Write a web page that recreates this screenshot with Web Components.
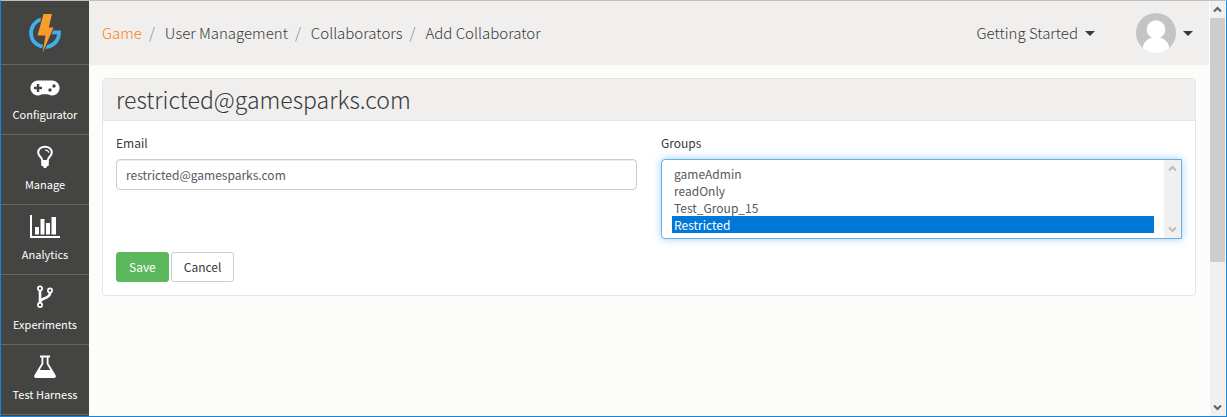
<!DOCTYPE html>
<html lang="en">
<head>
<meta charset="utf-8">
<title>Add Collaborator</title>
<style>
  html, body { margin: 0; height: 100%; }
  body { font: 13px/20px "Noto Sans CJK SC", "Open Sans", sans-serif; color: #373a3c; overflow: hidden; }
</style>
</head>
<body>
<app-shell>
  <side-nav slot="nav">
    <side-item icon="gamepad">Configurator</side-item>
    <side-item icon="bulb">Manage</side-item>
    <side-item icon="chart">Analytics</side-item>
    <side-item icon="fork">Experiments</side-item>
    <side-item icon="flask">Test Harness</side-item>
    <side-item></side-item>
  </side-nav>
  <top-bar slot="top"></top-bar>
  <form-panel heading="restricted@gamesparks.com">
    <collaborator-form></collaborator-form>
  </form-panel>
  <scroll-rail slot="rail"></scroll-rail>
</app-shell>

<script>
const define = (name, html, setup) => customElements.define(name, class extends HTMLElement {
  connectedCallback() {
    if (this.shadowRoot) return;
    this.attachShadow({ mode: 'open' }).innerHTML = '<style>*{box-sizing:border-box}</style>' + html;
    if (setup) setup(this, this.shadowRoot);
  }
});

define('app-shell', `
<style>
  :host { display: flex; box-sizing: border-box; height: 100vh; border: 1px solid #1883d7; border-top-color: #bfbfbf; background: #fcfcfa; overflow: hidden; }
  .main { flex: 1; min-width: 0; }
  main { padding: 13px; }
</style>
<slot name="nav"></slot>
<div class="main"><slot name="top"></slot><main><slot></slot></main></div>
<slot name="rail"></slot>`);

define('side-nav', `
<style>
  :host { display: block; flex: none; width: 88px; background: #444442; overflow: hidden; }
  .logo { display: flex; height: 64px; align-items: center; justify-content: center; border-bottom: 1px solid #666664; }
</style>
<a class="logo" href="#" aria-label="Home">
  <svg width="34" height="44" viewBox="0 0 34 44">
    <path d="M13 8.500A14 14 0 1 0 31 21.300H22.500" fill="none" stroke="#3fb1e8" stroke-width="3.800"/>
    <path d="M15.500 3H24L20.800 16.500H25.500L14.500 42L17.500 24.500H9.500Z" fill="#f99d2a" stroke="#444442" stroke-width="2" paint-order="stroke"/>
  </svg>
</a>
<nav><slot></slot></nav>`);

const icons = {
  gamepad: `<svg width="30" height="24" viewBox="0 -4 30 24"><path fill="#fff" fill-rule="evenodd" d="M8 1.500H22A7.500 7.500 0 1 1 18 15.300H12A7.500 7.500 0 1 1 8 1.500ZM6.800 5V7.800H4V10.200H6.800V13H9.200V10.200H12V7.800H9.200V5Z"/><circle cx="20" cy="11" r="1.700" fill="#444442"/><circle cx="24" cy="7" r="1.700" fill="#444442"/></svg>`,
  bulb: `<svg width="18" height="24" viewBox="0 0 18 24"><path d="M6.500 16C6.300 12 2.200 11.500 2.200 7.500C2.200 4 5.200 1.800 9 1.800S15.800 4 15.800 7.500C15.800 11.500 11.700 12 11.500 16Z" fill="none" stroke="#fff" stroke-width="2"/><path d="M9 5C11 5 12.500 6 12.700 7.600" fill="none" stroke="#fff" stroke-width="1.200"/><path d="M5.200 15.500H12.800V20.500L10.800 21.500L10 23H8L7.200 21.500L5.200 20.500Z" fill="#fff"/></svg>`,
  chart: `<svg width="32" height="24" viewBox="0 0 32 24"><path fill="#fff" d="M1 0H3V21H31V23H1ZM6 12H10V19.500H6ZM11.500 4H15.500V19.500H11.500ZM17 8H21V19.500H17ZM22.500 2H27V19.500H22.500Z"/></svg>`,
  fork: `<svg width="18" height="24" viewBox="0 0 18 24" fill="none" stroke="#fff"><circle cx="4" cy="3.500" r="2.100" stroke-width="1.700"/><circle cx="14" cy="5.500" r="2.100" stroke-width="1.700"/><circle cx="4" cy="20" r="2.100" stroke-width="1.700"/><path d="M4 6V17.500M14 8C14 14.500 4.500 12 4.200 17" stroke-width="2.600"/></svg>`,
  flask: `<svg width="24" height="24" viewBox="0 0 24 24"><path fill="#fff" fill-rule="evenodd" d="M7 .5H17V2.500H15.500V8.500L22.500 20C23.500 22 22.500 23 21 23H3C1.500 23 .5 22 1.500 20L8.500 8.500V2.500H7ZM10.300 2.500V9L6.700 15H17.300L13.700 9V2.500Z"/></svg>`
};
define('side-item', `
<style>
  :host { display: block; }
  a { display: flex; flex-direction: column; align-items: center; height: 70px; padding-top: 10px; border-bottom: 1px solid #666664; color: #fff; text-decoration: none; font-size: 11px; }
  .icon { display: flex; height: 24px; align-items: center; margin-bottom: 5px; }
  svg { display: block; }
</style>
<a href="#"><span class="icon"></span><span><slot></slot></span></a>`,
(el, root) => { root.querySelector('.icon').innerHTML = icons[el.getAttribute('icon')] || ''; });

define('top-bar', `
<style>
  :host { display: flex; justify-content: space-between; align-items: center; height: 64px; padding: 0 16px 0 13px; background: #f0efee; font-size: 15px; line-height: 24px; font-weight: 300; box-sizing: border-box; }
  ol { display: flex; list-style: none; margin: 0; padding: 0; }
  li + li::before { content: "/"; color: #818a91; padding: 0 10px 0 7px; }
  a { color: inherit; text-decoration: none; }
  li:first-child a { color: #ff7f00; }
  .right { display: flex; align-items: center; gap: 41px; }
  button { display: flex; align-items: center; gap: 7px; border: 0; padding: 0; background: none; font: inherit; color: inherit; }
  .caret { border: 5px solid transparent; border-top-color: #373a3c; border-bottom: 0; }
  svg { display: block; }
</style>
<nav aria-label="Breadcrumb"><ol>
  <li><a href="#">Game</a></li><li><a href="#">User Management</a></li><li><a href="#">Collaborators</a></li><li>Add Collaborator</li>
</ol></nav>
<div class="right">
  <button type="button">Getting Started <span class="caret"></span></button>
  <button type="button" aria-label="Account">
    <svg width="40" height="40" viewBox="0 0 40 40"><defs><clipPath id="c"><circle cx="20" cy="20" r="20"/></clipPath></defs><g clip-path="url(#c)"><path fill="#c4c4c4" d="M0 0H40V40H0Z"/><circle cx="20" cy="16.500" r="9.300" fill="#fff"/><path fill="#fff" d="M6 40C6 29 12 24 20 24S34 29 34 40Z"/></g></svg>
    <span class="caret"></span>
  </button>
</div>`);

define('form-panel', `
<style>
  :host { display: block; border: 1px solid #e5e5e5; border-radius: 4px; background: #fff; overflow: hidden; }
  h1 { margin: 0; padding: 4px 13px; background: #f0efee; border-bottom: 1px solid #e5e5e5; font-size: 23px; line-height: 33px; font-weight: 300; }
  div { padding: 13px; }
</style>
<h1></h1><div><slot></slot></div>`,
(el, root) => { root.querySelector('h1').textContent = el.getAttribute('heading'); });

define('collaborator-form', `
<style>
  :host { display: block; font-size: 12px; }
  .row { display: grid; grid-template-columns: 1fr 1fr; gap: 24px; }
  label { display: block; line-height: 18px; margin-bottom: 7px; }
  input, select, button { display: block; font: inherit; }
  input { width: 100%; height: 31px; padding: 0 9px; border: 1px solid #ccc; border-radius: 4px; color: #55595c; background: #fff; box-shadow: inset 0 1px 1px #00000013; outline: 0; }
  .list { display: flex; height: 80px; border: 1px solid #66afe9; border-radius: 4px 0 0 4px; box-shadow: 0 0 8px #66afe999; background: #fff; }
  select { flex: 1; min-width: 0; height: 78px; margin: 0; padding: 5px 10px; border: 0; outline: 0; background: none; color: #55595c; overflow: hidden; scrollbar-width: none; }
  option { min-height: 17px; height: 17px; line-height: 17px; padding: 0 2px; }
  option:checked { background: #0078d7 linear-gradient(#0078d7, #0078d7); color: #fff; }
  .rail { display: flex; flex-direction: column; justify-content: space-between; align-items: center; width: 17px; padding: 5px 0; background: #f0f0f0; }
  .actions { display: flex; gap: 2px; margin-top: 13px; }
  button { height: 30px; padding: 0 12px; border: 1px solid #ccc; border-radius: 3px; background: #fff; color: #373a3c; }
  .save { background: #5cb85c; border-color: #5cb85c; color: #fff; }
</style>
<form>
  <div class="row">
    <div><label for="email">Email</label><input id="email" type="text" value="restricted@gamesparks.com"></div>
    <div><label for="groups">Groups</label>
      <div class="list">
        <select id="groups" multiple size="4"><option>gameAdmin</option><option>readOnly</option><option>Test_Group_15</option><option selected>Restricted</option></select>
        <div class="rail" aria-hidden="true">
          <svg width="9" height="7" viewBox="0 0 9 7"><path d="M1 5.500L4.500 2L8 5.500" fill="none" stroke="#bbb" stroke-width="2"/></svg>
          <svg width="9" height="7" viewBox="0 0 9 7"><path d="M1 1.500L4.500 5L8 1.500" fill="none" stroke="#bbb" stroke-width="2"/></svg>
        </div>
      </div>
    </div>
  </div>
  <div class="actions"><button class="save" type="button">Save</button><button type="button">Cancel</button></div>
</form>`);

define('scroll-rail', `
<style>
  :host { display: flex; flex: none; flex-direction: column; align-items: center; width: 17px; background: #f0f0f0; border-left: 1px solid #fff; border-right: 1px solid #fff; box-sizing: border-box; }
  svg { flex: none; margin: 5px 0; }
  .track { flex: 1; width: 100%; }
  .thumb { height: 64%; background: #cdcdcd; }
</style>
<svg width="9" height="7" viewBox="0 0 9 7"><path d="M1 5.500L4.500 2L8 5.500" fill="none" stroke="#606060" stroke-width="2"/></svg>
<div class="track"><div class="thumb"></div></div>
<svg width="9" height="7" viewBox="0 0 9 7"><path d="M1 1.500L4.500 5L8 1.500" fill="none" stroke="#606060" stroke-width="2"/></svg>`);
</script>
</body>
</html>
